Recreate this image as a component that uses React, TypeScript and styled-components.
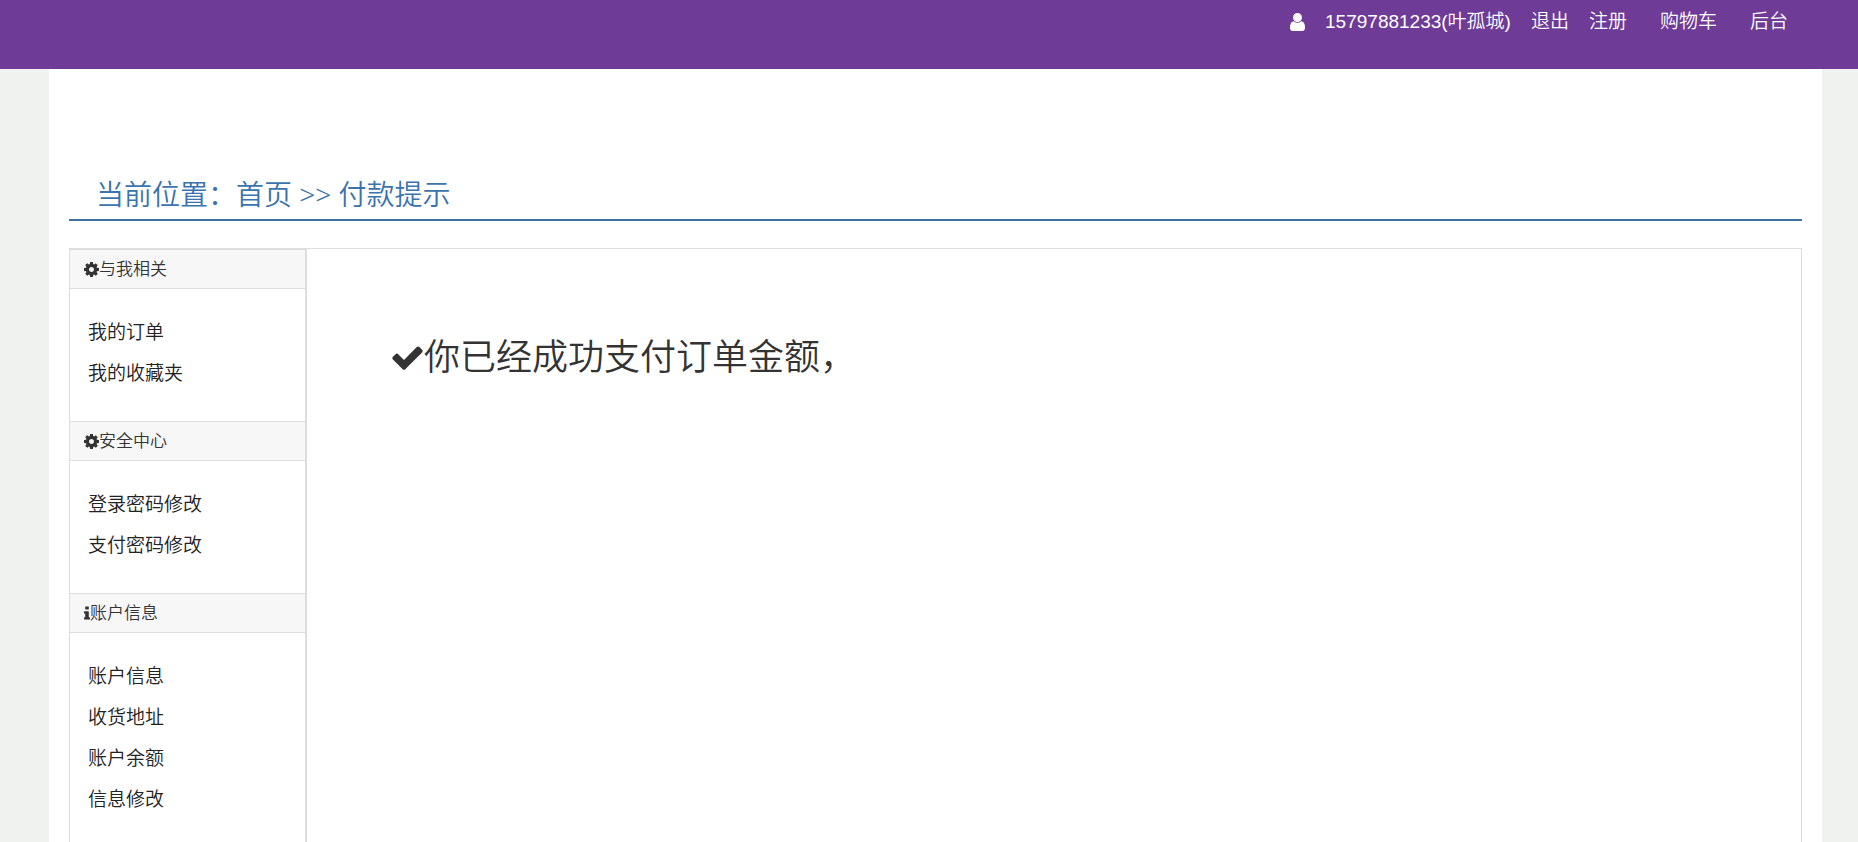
import React from "react";
import styled, { createGlobalStyle } from "styled-components";

const GlobalStyle = createGlobalStyle`
  *, *::before, *::after { box-sizing: border-box; }
  body {
    margin: 0;
    background: #f0f2f0;
    color: #333;
    font-family: "Noto Sans", "Noto Sans CJK SC", sans-serif;
    font-weight: 350;
  }
`;

const Page = styled.div`
  display: flex;
  flex-direction: column;
  height: 100vh;
`;

const TopBar = styled.header`
  flex: none;
  height: 69px;
  padding: 8px 70px 0 20px;
  background: #6e3b96;
`;

const TopNav = styled.nav`
  display: flex;
  justify-content: flex-end;
  align-items: center;
  color: #fff;
  font-family: "Liberation Sans", "Noto Sans CJK SC", sans-serif;
  font-size: 19px;
  line-height: 28px;
`;

const TopLink = styled.a<{ $gap?: number }>`
  display: flex;
  align-items: center;
  margin-left: ${(p) => p.$gap ?? 20}px;
  color: #fff;
  text-decoration: none;
  white-space: nowrap;
`;

const Icon = styled.svg<{ $width: number; $height: number }>`
  flex: none;
  display: block;
  width: ${(p) => p.$width}px;
  height: ${(p) => p.$height}px;
  fill: currentColor;
`;

const Scroller = styled.div`
  flex: 1;
  min-height: 0;
  padding: 0 36px 0 49px;
  overflow-y: auto;
  scrollbar-width: none;
`;

const Sheet = styled.div`
  min-height: 100%;
  padding: 100px 20px 20px;
  background: #fff;
`;

const Breadcrumb = styled.nav`
  padding: 6px 27px;
  border-bottom: 2px solid #40729f;
  color: #3a73ae;
  font-size: 28px;
  line-height: 38px;
  white-space: pre;

  a {
    color: inherit;
    text-decoration: none;
  }
`;

const Panel = styled.div`
  display: flex;
  margin-top: 27px;
  border: 1px solid #ddd;
  border-left: 0;
`;

const Sidebar = styled.aside`
  flex: none;
  width: 238px;
  border-left: 1px solid #ddd;
  border-right: 2px solid #ddd;
`;

const SectionTitle = styled.h2`
  display: flex;
  align-items: center;
  height: 40px;
  margin: 0;
  padding: 0 14px;
  border-top: 1px solid #ddd;
  border-bottom: 1px solid #ddd;
  background: #f7f7f7;
  font-size: 17px;
  font-weight: 350;
  line-height: 38px;
`;

const SectionList = styled.ul`
  margin: 0;
  padding: 23px 18px 27px;
  list-style: none;
  font-size: 19px;
  line-height: 41px;
`;

const SideLink = styled.a`
  display: block;
  color: #222;
  text-decoration: none;
`;

const Message = styled.main`
  flex: 1;
  padding: 85px 84px;
`;

const MessageTitle = styled.h1`
  display: flex;
  align-items: center;
  margin: 0;
  font-size: 36px;
  font-weight: 350;
  line-height: 46px;
`;

const icons = {
  user: {
    box: "256 128 1280 1536",
    d: "M1536 1399q0 109-62.5 187t-150.5 78h-854q-88 0-150.5-78t-62.5-187q0-85 8.5-160.5t31.5-152 58.5-131 94-89 134.5-34.5q131 128 313 128t313-128q76 0 134.5 34.5t94 89 58.5 131 31.5 152 8.5 160.5zm-256-887q0 159-112.5 271.5t-271.5 112.5-271.5-112.5-112.5-271.5 112.5-271.5 271.5-112.5 271.5 112.5 112.5 271.5z",
  },
  cog: {
    box: "128 128 1536 1536",
    d: "M1152 896q0-106-75-181t-181-75-181 75-75 181 75 181 181 75 181-75 75-181zm512-109v222q0 12-8 23t-20 13l-185 28q-19 54-39 91 35 50 107 138 10 12 10 25t-9 23q-27 37-99 108t-94 71q-12 0-26-9l-138-108q-44 23-91 38-16 136-29 186-7 28-36 28h-222q-14 0-24.5-8.5t-11.5-21.5l-28-184q-49-16-90-37l-141 107q-10 9-25 9-14 0-25-11-126-114-165-168-7-10-7-23 0-12 8-23 15-21 51-66.5t54-70.5q-27-50-41-99l-183-27q-13-2-21-12.5t-8-23.5v-222q0-12 8-23t19-13l186-28q14-46 39-92-40-57-107-138-10-12-10-24 0-10 9-23 26-36 98.5-107.5t94.5-71.5q13 0 26 10l138 107q44-23 91-38 16-136 29-186 7-28 36-28h222q14 0 24.5 8.5t11.5 21.5l28 184q49 16 90 37l142-107q9-9 24-9 13 0 25 10 129 119 165 170 7 8 7 22 0 12-8 23-15 21-51 66.5t-54 70.5q26 50 41 98l183 28q13 2 21 12.5t8 23.5z",
  },
  info: {
    box: "576 128 640 1408",
    d: "M1216 1344v128q0 26-19 45t-45 19h-512q-26 0-45-19t-19-45v-128q0-26 19-45t45-19h64v-384h-64q-26 0-45-19t-19-45v-128q0-26 19-45t45-19h384q26 0 45 19t19 45v576h64q26 0 45 19t19 45zm-128-1152v192q0 26-19 45t-45 19h-256q-26 0-45-19t-19-45v-192q0-26 19-45t45-19h256q26 0 45 19t19 45z",
  },
  check: {
    box: "60 256 1672 1280",
    d: "M1671 566q0 40-28 68l-724 724-136 136q-28 28-68 28t-68-28l-136-136-362-362q-28-28-28-68t28-68l136-136q28-28 68-28t68 28l294 295 656-657q28-28 68-28t68 28l136 136q28 28 28 68z",
  },
};

function Glyph({ name, width, height }: { name: keyof typeof icons; width: number; height: number }) {
  return (
    <Icon viewBox={icons[name].box} $width={width} $height={height} aria-hidden="true">
      <path d={icons[name].d} />
    </Icon>
  );
}

const sections = [
  { title: "与我相关", icon: "cog", iconWidth: 15, items: ["我的订单", "我的收藏夹"] },
  { title: "安全中心", icon: "cog", iconWidth: 15, items: ["登录密码修改", "支付密码修改"] },
  { title: "账户信息", icon: "info", iconWidth: 6, items: ["账户信息", "收货地址", "账户余额", "信息修改"] },
] as const;

export default function App() {
  return (
    <>
      <GlobalStyle />
      <Page>
        <TopBar>
          <TopNav>
            <Glyph name="user" width={15} height={18} />
            <TopLink href="#">15797881233(叶孤城)</TopLink>
            <TopLink href="#">退出</TopLink>
            <TopLink href="#">注册</TopLink>
            <TopLink href="#" $gap={33}>购物车</TopLink>
            <TopLink href="#" $gap={33}>后台</TopLink>
          </TopNav>
        </TopBar>
        <Scroller>
          <Sheet>
            <Breadcrumb>
              当前位置：<a href="#">首页</a>{" >> "}<a href="#">付款提示</a>
            </Breadcrumb>
            <Panel>
              <Sidebar>
                {sections.map((s) => (
                  <section key={s.title}>
                    <SectionTitle>
                      <Glyph name={s.icon} width={s.iconWidth} height={s.icon === "cog" ? 15 : 14} />
                      {s.title}
                    </SectionTitle>
                    <SectionList>
                      {s.items.map((item) => (
                        <li key={item}>
                          <SideLink href="#">{item}</SideLink>
                        </li>
                      ))}
                    </SectionList>
                  </section>
                ))}
              </Sidebar>
              <Message>
                <MessageTitle>
                  <Glyph name="check" width={33} height={25} />
                  你已经成功支付订单金额，
                </MessageTitle>
              </Message>
            </Panel>
          </Sheet>
        </Scroller>
      </Page>
    </>
  );
}
